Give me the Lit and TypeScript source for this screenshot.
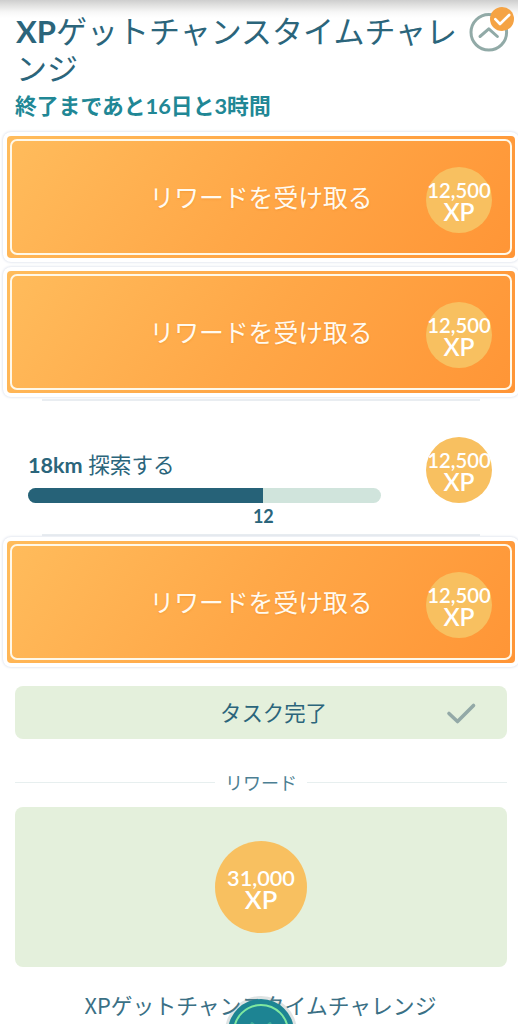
import { LitElement, html, css } from "lit";
import { customElement, property } from "lit/decorators.js";

@customElement("xp-badge")
class XpBadge extends LitElement {
  @property() amount = "";
  static styles = css`
    :host { display: flex; flex-direction: column; align-items: center; justify-content: center;
      box-sizing: border-box; flex: none; width: 66px; height: 66px; padding-top: 2px; border-radius: 50%;
      background: #f8c060; color: #fff; font-family: Lato, sans-serif; font-weight: 600; }
    :host([large]) { width: 92px; height: 92px; padding-top: 2px; }
    .amount { font-size: 20.3px; line-height: 21px; white-space: nowrap; }
    .unit { font-size: 24.5px; line-height: 21px; }
    :host([large]) .amount { font-size: 21.7px; line-height: 22px; }
    :host([large]) .unit { font-size: 25.5px; }
  `;
  render() {
    return html`<span class="amount">${this.amount}</span><span class="unit">XP</span>`;
  }
}

@customElement("claim-row")
class ClaimRow extends LitElement {
  @property() amount = "";
  static styles = css`
    :host { display: block; height: 135px; box-sizing: border-box; padding: 2px 0 3px 3px; }
    .frame { box-sizing: border-box; width: 516px; height: 130px; padding: 4px; border-radius: 8px;
      background: #fff; box-shadow: 0 0 3px #ccd3e3; }
    .fill { box-sizing: border-box; height: 122px; padding: 3px; border-radius: 4px;
      background: linear-gradient(125deg, #ffbc5c 0%, #ffa747 50%, #ff9536 100%); }
    .inner { box-sizing: border-box; height: 116px; border: 2.5px solid #fff8e8; border-radius: 7px;
      display: grid; grid-template-columns: 410px 1fr; }
    .label { align-self: center; padding: 0 0 3px 88px; text-align: center; color: #fffaf0;
      font: 400 24.8px/36px "Noto Sans CJK JP", sans-serif; white-space: nowrap;
      text-shadow: 0 1px 2px #e5851c66; }
    xp-badge { margin-top: 26px; justify-self: start; margin-left: 4px; }
  `;
  render() {
    return html`<div class="frame"><div class="fill"><div class="inner">
      <span class="label">リワードを受け取る</span><xp-badge amount=${this.amount}></xp-badge>
    </div></div></div>`;
  }
}

@customElement("progress-row")
class ProgressRow extends LitElement {
  @property() amount = "";
  @property({ type: Number }) value = 0;
  @property({ type: Number }) total = 1;
  static styles = css`
    :host { display: flex; justify-content: space-between; box-sizing: border-box; height: 135px;
      padding: 0 26px 0 28px; color: #2b657b; }
    .task { width: 353px; padding-top: 49px; }
    .name { font: 400 21.6px/32px Lato, "Noto Sans CJK JP", sans-serif; }
    b { font-weight: 700; }
    .track { height: 15px; margin-top: 6.5px; border-radius: 7.5px; background: #d0e4dc; overflow: hidden; }
    .bar { height: 100%; background: #266278; }
    .scale { display: flex; justify-content: flex-end; font: 700 18px/26px Lato, sans-serif; }
    .value { transform: translateX(50%); }
    xp-badge { margin-top: 37px; }
  `;
  render() {
    const share = (this.value / this.total) * 100;
    return html`<div class="task">
        <div class="name"><b>${this.total}km</b> 探索する</div>
        <div class="track"><div class="bar" style="width:${share}%"></div></div>
        <div class="scale" style="width:${share}%"><span class="value">${this.value}</span></div>
      </div><xp-badge amount=${this.amount}></xp-badge>`;
  }
}

@customElement("app-root")
class AppRoot extends LitElement {
  static styles = css`
    :host { display: block; position: relative; width: 518px; height: 1024px; overflow: hidden;
      background: #fff; color: #2b657b; font-family: Lato, "Noto Sans CJK JP", sans-serif; }
    .header { box-sizing: border-box; height: 130px; padding: 13px 0 0 15px; display: flex;
      background: linear-gradient(#cecece 0, #e0e0df 5px, #f7f7f7 12px, #fff 18px) no-repeat; }
    .heading { width: 454px; flex: none; }
    h1 { margin: 0; padding-left: 1px; font-weight: 400; font-size: 31px; line-height: 37px; white-space: nowrap; }
    h1 b { font-weight: 700; }
    h2 { margin: 3px 0 0; font-size: 21.8px; line-height: 32px; font-weight: 700; color: #218795; white-space: nowrap; }
    .toggle { flex: none; width: 48px; height: 54px; margin-top: -10px; }
    .tasks { display: block; }
    .rule { height: 2px; margin: -1px 38px -1px 42px; background: #e9edf1; }
    .done { box-sizing: border-box; display: grid; grid-template-columns: 1fr auto; align-items: center;
      height: 53px; margin: 16px 11px 0 15px; padding: 0 30px 0 86px; border-radius: 8px; background: #e4f0dc;
      font-size: 21.4px; line-height: 30px; text-align: center; }
    .divider { display: flex; align-items: center; gap: 10px; height: 26px; margin: 30px 11px 0 15px;
      font-size: 18px; line-height: 26px; color: #4c7f93; }
    .divider span { padding-top: 2px; }
    .divider::before, .divider::after { content: ""; flex: 1; height: 1px; background: #e7efef; }
    .reward { display: flex; align-items: center; justify-content: center; height: 160px;
      margin: 12px 11px 0 15px; border-radius: 8px; background: #e4f0dc; }
    .footer { margin-top: 22px; text-align: center; padding-left: 3px; white-space: nowrap;
      font: 400 21.8px/32px "Noto Sans CJK JP", sans-serif; color: #3a7085; }
    .ball { position: absolute; left: 223px; top: 994px; width: 76px; height: 76px; }
  `;
  render() {
    return html`
      <header class="header">
        <div class="heading">
          <h1><b>XP</b>ゲットチャンスタイムチャレ<br>ンジ</h1>
          <h2>終了まであと16日と3時間</h2>
        </div>
        <svg class="toggle" viewBox="469 3 48 54" fill="none" stroke-linecap="round" stroke-linejoin="round">
          <circle cx="488.8" cy="32.3" r="17.8" stroke="#91aaa7" stroke-width="3"/>
          <path d="M480 36.5 488.8 28.8 497.4 36.5" stroke="#91aaa7" stroke-width="3"/>
          <circle cx="502" cy="19" r="12" fill="#f5a344"/>
          <path d="M495.3 19.2 500 24 509.2 15" stroke="#fff" stroke-width="2.6"/>
        </svg>
      </header>
      <section class="tasks">
        <claim-row amount="12,500"></claim-row>
        <claim-row amount="12,500"></claim-row>
        <div class="rule"></div>
        <progress-row amount="12,500" value="12" total="18"></progress-row>
        <div class="rule"></div>
        <claim-row amount="12,500"></claim-row>
      </section>
      <div class="done"><span>タスク完了</span>
        <svg width="31" height="24" viewBox="0 0 31 24" fill="none" stroke="#93a9a7" stroke-width="3.6" stroke-linecap="round" stroke-linejoin="round"><path d="M3 12.5 11.5 20.5 27.5 4.5"/></svg>
      </div>
      <div class="divider"><span>リワード</span></div>
      <div class="reward"><xp-badge large amount="31,000"></xp-badge></div>
      <div class="footer">XPゲットチャンスタイムチャレンジ</div>
      <svg class="ball" viewBox="0 0 76 76" fill="none">
        <circle cx="38" cy="38" r="36" fill="#7d8f8f" opacity=".25"/>
        <circle cx="38" cy="38" r="33" fill="#1d8493"/>
        <circle cx="38" cy="38" r="27" stroke="#7fe8a0" stroke-width="2"/>
        <path d="M29 29.5 38 38 47 29.5M29 46.5 38 38" stroke="#3fae9c" stroke-width="3" stroke-linecap="round"/>
      </svg>`;
  }
}
